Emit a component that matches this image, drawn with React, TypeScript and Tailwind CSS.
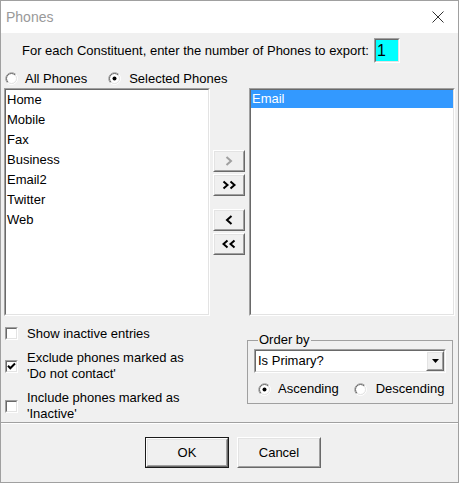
import React from "react";

const sunkenOuter =
  "border border-t-[#a0a0a0] border-l-[#a0a0a0] border-r-white border-b-white";
const sunkenInner =
  "border border-t-[#696969] border-l-[#696969] border-r-[#e3e3e3] border-b-[#e3e3e3]";
const raisedOuter =
  "border border-t-white border-l-white border-r-[#696969] border-b-[#696969]";
const raisedInner =
  "border border-t-[#e3e3e3] border-l-[#e3e3e3] border-r-[#a0a0a0] border-b-[#a0a0a0]";

function Radio({ checked = false }: { checked?: boolean }) {
  return (
    <svg width="13" height="13" viewBox="0 0 13 13" className="shrink-0">
      <circle cx="6.5" cy="6.5" r="6" fill="none" stroke="#ffffff" strokeWidth="1" />
      <path d="M2.26 10.74 A6 6 0 0 1 10.74 2.26" fill="none" stroke="#a0a0a0" strokeWidth="1" />
      <circle cx="6.5" cy="6.5" r="5" fill="#ffffff" stroke="#e3e3e3" strokeWidth="1" />
      <path d="M2.96 10.04 A5 5 0 0 1 10.04 2.96" fill="none" stroke="#696969" strokeWidth="1" />
      {checked && <circle cx="6.5" cy="6.5" r="2" fill="#000000" />}
    </svg>
  );
}

function Checkbox({ checked = false }: { checked?: boolean }) {
  return (
    <div className={sunkenOuter + " w-[13px] h-[13px] shrink-0"}>
      <div className={sunkenInner + " w-full h-full bg-white flex items-center justify-center"}>
        {checked && (
          <svg width="9" height="9" viewBox="0 0 9 9">
            <polyline points="1,3.8 3.3,6.2 8,1.5" fill="none" stroke="#000" strokeWidth="2" />
          </svg>
        )}
      </div>
    </div>
  );
}

function ArrowBtn({ children }: { children: React.ReactNode }) {
  return (
    <div className={raisedOuter + " w-[32px] h-[22px]"}>
      <div className={raisedInner + " w-full h-full bg-[#f0f0f0] flex items-center justify-center"}>
        {children}
      </div>
    </div>
  );
}

function Chev({ dir, color }: { dir: "r" | "l"; color: string }) {
  return (
    <svg width="8" height="10" viewBox="0 0 8 10">
      <polyline
        points={dir === "r" ? "1.5,1 6,5 1.5,9" : "6.5,1 2,5 6.5,9"}
        fill="none"
        stroke={color}
        strokeWidth="2"
      />
    </svg>
  );
}

function DoubleChev({ dir }: { dir: "r" | "l" }) {
  return (
    <svg width="15" height="10" viewBox="0 0 15 10">
      <polyline
        points={dir === "r" ? "1.5,1.5 5.5,5 1.5,8.5" : "5.5,1.5 1.5,5 5.5,8.5"}
        fill="none"
        stroke="#000"
        strokeWidth="2"
      />
      <polyline
        points={dir === "r" ? "8.5,1.5 12.5,5 8.5,8.5" : "12.5,1.5 8.5,5 12.5,8.5"}
        fill="none"
        stroke="#000"
        strokeWidth="2"
      />
    </svg>
  );
}

const leftItems = ["Home", "Mobile", "Fax", "Business", "Email2", "Twitter", "Web"];

export default function App() {
  return (
    <div className="w-[459px] h-[483px] bg-[#f0f0f0] border border-[#a0a0a0] flex flex-col font-['Liberation_Sans',Arial,sans-serif] text-[13px] text-black overflow-hidden">
      {/* Title bar */}
      <div className="h-[32px] shrink-0 bg-white flex items-center justify-between pl-[5px] pr-[14px]">
        <span className="text-[14px] text-[#999999]">Phones</span>
        <svg width="12" height="12" viewBox="0 0 12 12">
          <path d="M0.5 0.5 L11.5 11.5 M11.5 0.5 L0.5 11.5" stroke="#333" strokeWidth="1" />
        </svg>
      </div>

      {/* Count row */}
      <div className="mt-[5px] h-[25px] shrink-0 flex items-center pl-[21px]">
        <span>For each Constituent, enter the number of Phones to export:</span>
        <div className={sunkenOuter + " ml-[5px] w-[26px] h-[25px]"}>
          <div className={sunkenInner + " w-full h-full bg-[#00ffff] pl-[1px] text-[16px] leading-[21px]"}>
            1
          </div>
        </div>
      </div>

      {/* Radio row */}
      <div className="mt-[6px] h-[19px] shrink-0 flex items-center pl-[4px]">
        <Radio />
        <span className="ml-[7px]">All Phones</span>
        <span className="ml-[21px] flex">
          <Radio checked />
        </span>
        <span className="ml-[8px]">Selected Phones</span>
      </div>

      {/* Lists row */}
      <div className="h-[228px] shrink-0 flex pl-[3px]">
        <div className={sunkenOuter + " w-[206px] h-full"}>
          <div className={sunkenInner + " w-full h-full bg-white pl-[1px]"}>
            {leftItems.map((t) => (
              <div key={t} className="h-[20px] leading-[20px]">
                {t}
              </div>
            ))}
          </div>
        </div>

        <div className="ml-[3px] w-[32px] pt-[62px] flex flex-col">
          <ArrowBtn>
            <Chev dir="r" color="#a0a0a0" />
          </ArrowBtn>
          <div className="mt-[2px]">
            <ArrowBtn>
              <DoubleChev dir="r" />
            </ArrowBtn>
          </div>
          <div className="mt-[13px]">
            <ArrowBtn>
              <Chev dir="l" color="#000" />
            </ArrowBtn>
          </div>
          <div className="mt-[2px]">
            <ArrowBtn>
              <DoubleChev dir="l" />
            </ArrowBtn>
          </div>
        </div>

        <div className={sunkenOuter + " ml-[4px] w-[206px] h-full"}>
          <div className={sunkenInner + " w-full h-full bg-white"}>
            <div className="h-[18px] leading-[18px] bg-[#3399ff] text-white pl-[1px]">Email</div>
          </div>
        </div>
      </div>

      {/* Bottom options */}
      <div className="h-[106px] shrink-0 flex">
        <div className="w-[246px] pl-[4px] flex flex-col">
          <div className="mt-[10px] h-[15px] flex items-center">
            <Checkbox />
            <span className="ml-[9px]">Show inactive entries</span>
          </div>
          <div className="mt-[9px] h-[32px] flex items-center">
            <Checkbox checked />
            <span className="ml-[9px] leading-[16px]">
              Exclude phones marked as
              <br />
              'Do not contact'
            </span>
          </div>
          <div className="mt-[8px] h-[32px] flex items-center">
            <Checkbox />
            <span className="ml-[9px] leading-[16px]">
              Include phones marked as
              <br />
              'Inactive'
            </span>
          </div>
        </div>

        <fieldset className="mt-[17px] self-start w-[206px] border border-[#a0a0a0] pb-[6px]">
          <legend className="ml-[10px] px-[1px] leading-[14px]">Order by</legend>
          <div className="mx-[6px] mt-[2px]">
            <div className={sunkenOuter + " h-[24px]"}>
              <div className={sunkenInner + " w-full h-full bg-white flex"}>
                <span className="flex-1 pl-[2px] leading-[20px]">Is Primary?</span>
                <div className={raisedOuter + " w-[18px] h-full"}>
                  <div className={raisedInner + " w-full h-full bg-[#f0f0f0] flex items-center justify-center"}>
                    <svg width="7" height="4" viewBox="0 0 7 4">
                      <polygon points="0,0 7,0 3.5,4" fill="#000" />
                    </svg>
                  </div>
                </div>
              </div>
            </div>
            <div className="mt-[8px] h-[16px] flex items-center pl-[4px]">
              <Radio checked />
              <span className="ml-[7px]">Ascending</span>
              <span className="ml-[15px] flex">
                <Radio />
              </span>
              <span className="ml-[9px]">Descending</span>
            </div>
          </div>
        </fieldset>
      </div>

      {/* Separator */}
      <div className="h-[2px] shrink-0 border-t border-t-[#a0a0a0] border-b border-b-white" />

      {/* Buttons */}
      <div className="mt-[13px] shrink-0 flex pl-[144px] gap-[8px]">
        <div className="w-[84px] h-[31px] border border-[#1a1a1a]">
          <div className={raisedOuter + " w-full h-full"}>
            <div className={raisedInner + " w-full h-full bg-[#f0f0f0] flex items-center justify-center"}>
              OK
            </div>
          </div>
        </div>
        <div className={raisedOuter + " w-[84px] h-[31px]"}>
          <div className={raisedInner + " w-full h-full bg-[#f0f0f0] flex items-center justify-center"}>
            Cancel
          </div>
        </div>
      </div>
    </div>
  );
}
